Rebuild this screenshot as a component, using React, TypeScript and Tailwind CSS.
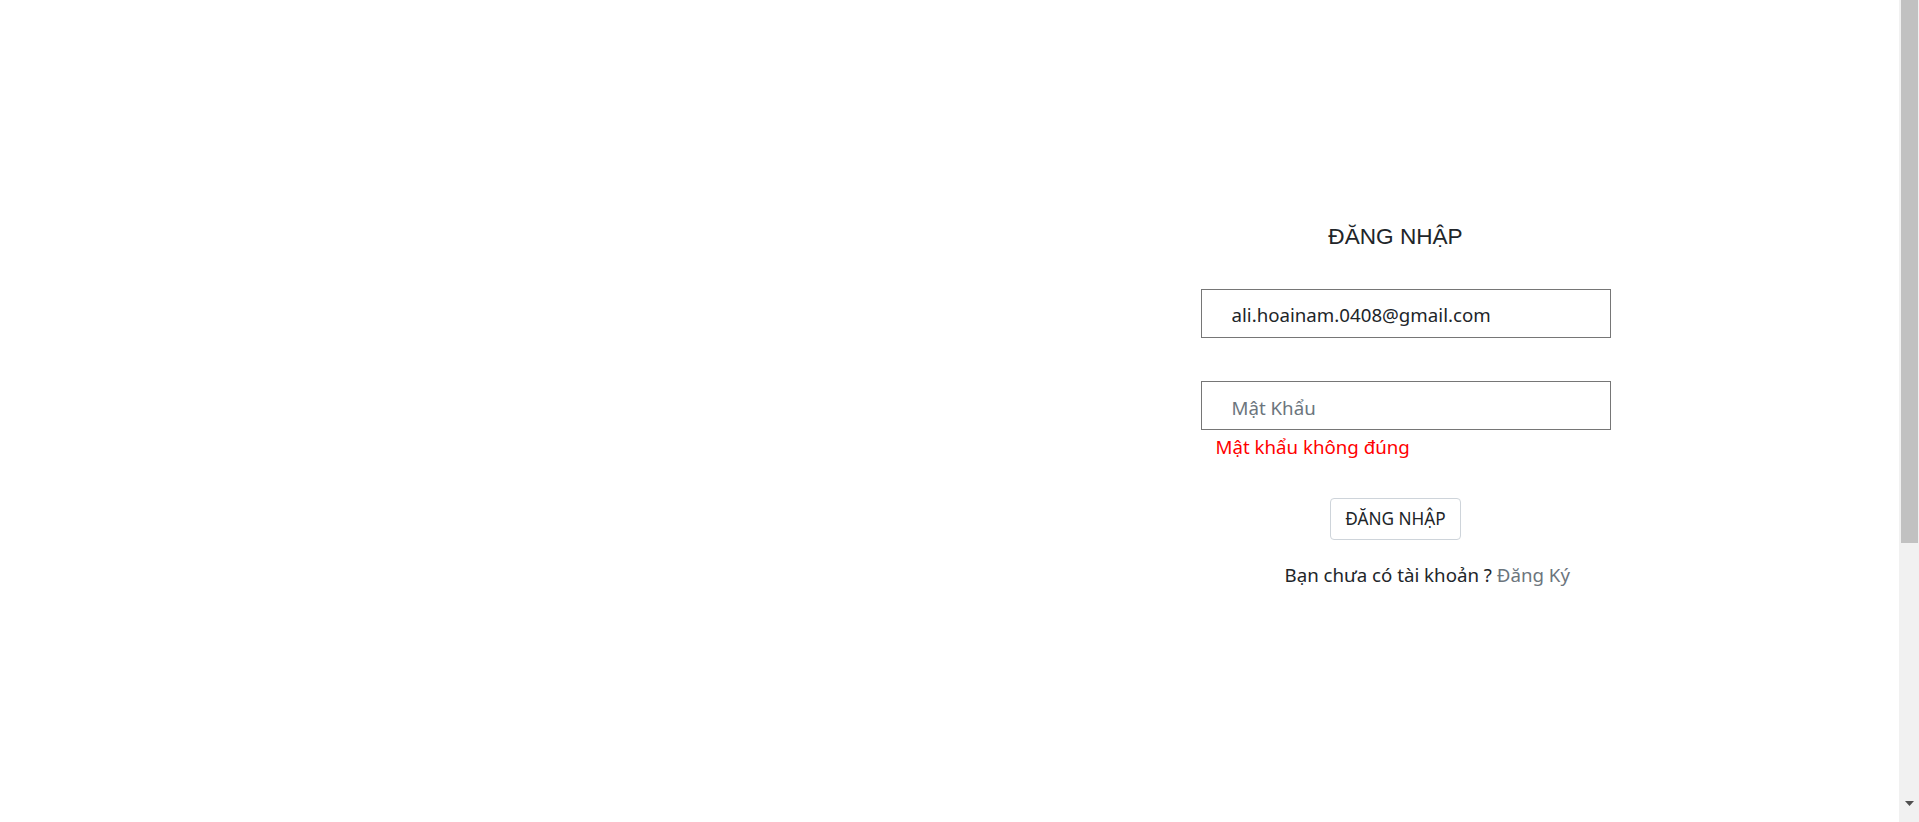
import React from "react";

export default function App() {
  return (
    <div className="flex h-screen w-full overflow-hidden bg-white">
      <div className="flex flex-1">
        <div className="w-1/2" />
        <div className="w-1/2 font-['Noto_Sans',sans-serif] text-[#212529]">
          <div className="ml-[251px] w-[410px] pt-[222px]">
            <h3 className="w-[390px] text-center font-['Liberation_Sans',Arial,sans-serif] text-[22.6px] leading-[30px] text-[#212529]">
              ĐĂNG NHẬP
            </h3>
            <div className="mt-[37px]">
              <input
                type="email"
                defaultValue="ali.hoainam.0408@gmail.com"
                className="block h-[49px] w-[410px] border border-[#767676] bg-white pl-[30px] pt-[2px] text-[18.7px] text-[#212529] outline-none"
              />
            </div>
            <div className="mt-[43px]">
              <input
                type="password"
                placeholder="Mật Khẩu"
                className="block h-[49px] w-[410px] border border-[#767676] bg-white pl-[30px] pt-[3px] text-[18.7px] text-[#212529] outline-none placeholder:text-[#6c757d]"
              />
              <p className="mt-[3px] pl-[15px] text-[18.7px] leading-[28px] text-[#ff0000]">Mật khẩu không đúng</p>
            </div>
            <div className="mt-[37px] flex w-[390px] justify-center">
              <button className="h-[42px] w-[131px] rounded-[4px] border border-[#ced4da] bg-white text-[17.2px] text-[#212529]">
                ĐĂNG NHẬP
              </button>
            </div>
          </div>
          <p className="mt-[21px] pl-[6px] text-center text-[18.7px] leading-[28px] text-[#212529]">
            Bạn chưa có tài khoản ? <a className="text-[#6c757d]">Đăng Ký</a>
          </p>
        </div>
      </div>
      <div className="flex h-full w-[20px] shrink-0 flex-col bg-[#f1f1f1]">
        <div className="ml-[2px] mr-[1px] h-[543px] bg-[#c1c1c1]" />
        <div className="flex-1" />
        <div className="flex h-[24px] items-start justify-center pl-[1px] pt-[3px]">
          <svg width="9" height="5" viewBox="0 0 9 5">
            <polygon points="0,0 9,0 4.5,5" fill="#505050" />
          </svg>
        </div>
      </div>
    </div>
  );
}
